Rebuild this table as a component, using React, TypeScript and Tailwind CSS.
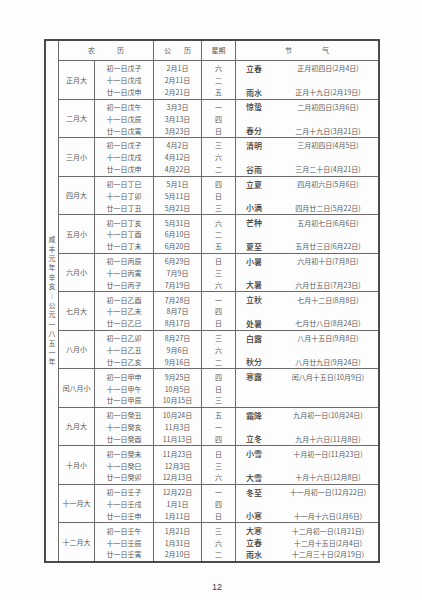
type Term = { name: string; date: string } | null;

type Month = {
  label: string;
  days: [string, string, string][];
  terms: [Term, Term, Term];
};

const months: Month[] = [
  {
    label: "正月大",
    days: [["初一日戊子", "2月1日", "六"], ["十一日戊戌", "2月11日", "二"], ["廿一日戊申", "2月21日", "五"]],
    terms: [{ name: "立春", date: "正月初四日(2月4日)" }, null, { name: "雨水", date: "正月十九日(2月19日)" }],
  },
  {
    label: "二月大",
    days: [["初一日戊午", "3月3日", "一"], ["十一日戊辰", "3月13日", "四"], ["廿一日戊寅", "3月23日", "日"]],
    terms: [{ name: "惊蛰", date: "二月初四日(3月6日)" }, null, { name: "春分", date: "二月十九日(3月21日)" }],
  },
  {
    label: "三月小",
    days: [["初一日戊子", "4月2日", "三"], ["十一日戊戌", "4月12日", "六"], ["廿一日戊申", "4月22日", "二"]],
    terms: [{ name: "清明", date: "三月初四日(4月5日)" }, null, { name: "谷雨", date: "三月二十日(4月21日)" }],
  },
  {
    label: "四月大",
    days: [["初一日丁巳", "5月1日", "四"], ["十一日丁卯", "5月11日", "日"], ["廿一日丁丑", "5月21日", "三"]],
    terms: [{ name: "立夏", date: "四月初六日(5月6日)" }, null, { name: "小满", date: "四月廿二日(5月22日)" }],
  },
  {
    label: "五月小",
    days: [["初一日丁亥", "5月31日", "六"], ["十一日丁酉", "6月10日", "二"], ["廿一日丁未", "6月20日", "五"]],
    terms: [{ name: "芒种", date: "五月初七日(6月6日)" }, null, { name: "夏至", date: "五月廿三日(6月22日)" }],
  },
  {
    label: "六月小",
    days: [["初一日丙辰", "6月29日", "日"], ["十一日丙寅", "7月9日", "三"], ["廿一日丙子", "7月19日", "六"]],
    terms: [{ name: "小暑", date: "六月初十日(7月8日)" }, null, { name: "大暑", date: "六月廿五日(7月23日)" }],
  },
  {
    label: "七月大",
    days: [["初一日乙酉", "7月28日", "一"], ["十一日乙未", "8月7日", "四"], ["廿一日乙巳", "8月17日", "日"]],
    terms: [{ name: "立秋", date: "七月十二日(8月8日)" }, null, { name: "处暑", date: "七月廿八日(8月24日)" }],
  },
  {
    label: "八月小",
    days: [["初一日乙卯", "8月27日", "三"], ["十一日乙丑", "9月6日", "六"], ["廿一日乙亥", "9月16日", "二"]],
    terms: [{ name: "白露", date: "八月十五日(9月8日)" }, null, { name: "秋分", date: "八月廿九日(9月24日)" }],
  },
  {
    label: "闰八月小",
    days: [["初一日甲申", "9月25日", "四"], ["十一日甲午", "10月5日", "日"], ["廿一日甲辰", "10月15日", "三"]],
    terms: [{ name: "寒露", date: "闰八月十五日(10月9日)" }, null, null],
  },
  {
    label: "九月大",
    days: [["初一日癸丑", "10月24日", "五"], ["十一日癸亥", "11月3日", "一"], ["廿一日癸酉", "11月13日", "四"]],
    terms: [{ name: "霜降", date: "九月初一日(10月24日)" }, null, { name: "立冬", date: "九月十六日(11月8日)" }],
  },
  {
    label: "十月小",
    days: [["初一日癸未", "11月23日", "日"], ["十一日癸巳", "12月3日", "三"], ["廿一日癸卯", "12月13日", "六"]],
    terms: [{ name: "小雪", date: "十月初一日(11月23日)" }, null, { name: "大雪", date: "十月十六日(12月8日)" }],
  },
  {
    label: "十一月大",
    days: [["初一日壬子", "12月22日", "一"], ["十一日壬戌", "1月1日", "四"], ["廿一日壬申", "1月11日", "日"]],
    terms: [{ name: "冬至", date: "十一月初一日(12月22日)" }, null, { name: "小寒", date: "十一月十六日(1月6日)" }],
  },
  {
    label: "十二月大",
    days: [["初一日壬午", "1月21日", "三"], ["十一日壬辰", "1月31日", "六"], ["廿一日壬寅", "2月10日", "二"]],
    terms: [
      { name: "大寒", date: "十二月初一日(1月21日)" },
      { name: "立春", date: "十二月十五日(2月4日)" },
      { name: "雨水", date: "十二月三十日(2月19日)" },
    ],
  },
];

const sideText = ["咸", "丰", "元", "年", "辛", "亥", "｜", "公", "元", "一", "八", "五", "一", "年"];

const font = "font-['Noto_Sans_CJK_SC','Liberation_Sans',sans-serif]";

function Col({ w, items }: { w: string; items: string[] }) {
  return (
    <div className={`${w} shrink-0 border-r border-[#6b6b6b] flex flex-col pt-[2px]`}>
      {items.map((t, i) => (
        <div key={i} className="flex-1 flex items-center justify-center text-[7px] leading-none text-[#5a5a5a]">
          {t}
        </div>
      ))}
    </div>
  );
}

function MonthGroup({ m }: { m: Month }) {
  return (
    <div className="flex flex-1 border-t border-[#6b6b6b]">
      <div className="w-[36px] shrink-0 border-r border-[#6b6b6b] flex items-center justify-center text-[7px] text-[#5a5a5a]">
        {m.label}
      </div>
      <Col w="w-[59px]" items={m.days.map((d) => d[0])} />
      <Col w="w-[48px]" items={m.days.map((d) => d[1])} />
      <Col w="w-[34px]" items={m.days.map((d) => d[2])} />
      <div className="flex-1 flex flex-col pt-[2px]">
        {m.terms.map((t, i) => (
          <div key={i} className="flex-1 grid grid-cols-[46px_1fr] items-center">
            <span className="pl-[10px] text-[8px] leading-none text-[#3a3a3a] font-medium">{t?.name ?? ""}</span>
            <span className="text-center text-[7px] leading-none text-[#5a5a5a] pr-[4px]">{t?.date ?? ""}</span>
          </div>
        ))}
      </div>
    </div>
  );
}

export default function App() {
  return (
    <div className={`w-[422px] h-[600px] bg-[#fdfdfd] ${font} flex flex-col pt-[39px] pl-[44px]`}>
      <div className="w-[336px] h-[524px] border-2 border-[#4a4a4a] flex">
        <div className="w-[13px] shrink-0 border-r border-[#6b6b6b] flex flex-col items-center justify-center">
          {sideText.map((c, i) => (
            <span key={i} className="text-[7px] leading-[9.4px] text-[#5a5a5a]">{c}</span>
          ))}
        </div>
        <div className="flex-1 flex flex-col">
          <div className="h-[19px] shrink-0 flex text-[7px] text-[#5a5a5a]">
            <div className="w-[95px] border-r border-[#6b6b6b] flex items-center justify-center gap-[22px]">
              <span>农</span><span>历</span>
            </div>
            <div className="w-[48px] border-r border-[#6b6b6b] flex items-center justify-center gap-[13px]">
              <span>公</span><span>历</span>
            </div>
            <div className="w-[34px] border-r border-[#6b6b6b] flex items-center justify-center">
              <span>星期</span>
            </div>
            <div className="flex-1 flex items-center justify-center gap-[30px]">
              <span>节</span><span>气</span>
            </div>
          </div>
          {months.map((m) => (
            <MonthGroup key={m.label} m={m} />
          ))}
        </div>
      </div>
      <div className="w-[336px] mt-[18px] text-center text-[9px] text-[#444] font-['Liberation_Sans',sans-serif]">
        <span className="pl-[10px]">12</span>
      </div>
    </div>
  );
}
